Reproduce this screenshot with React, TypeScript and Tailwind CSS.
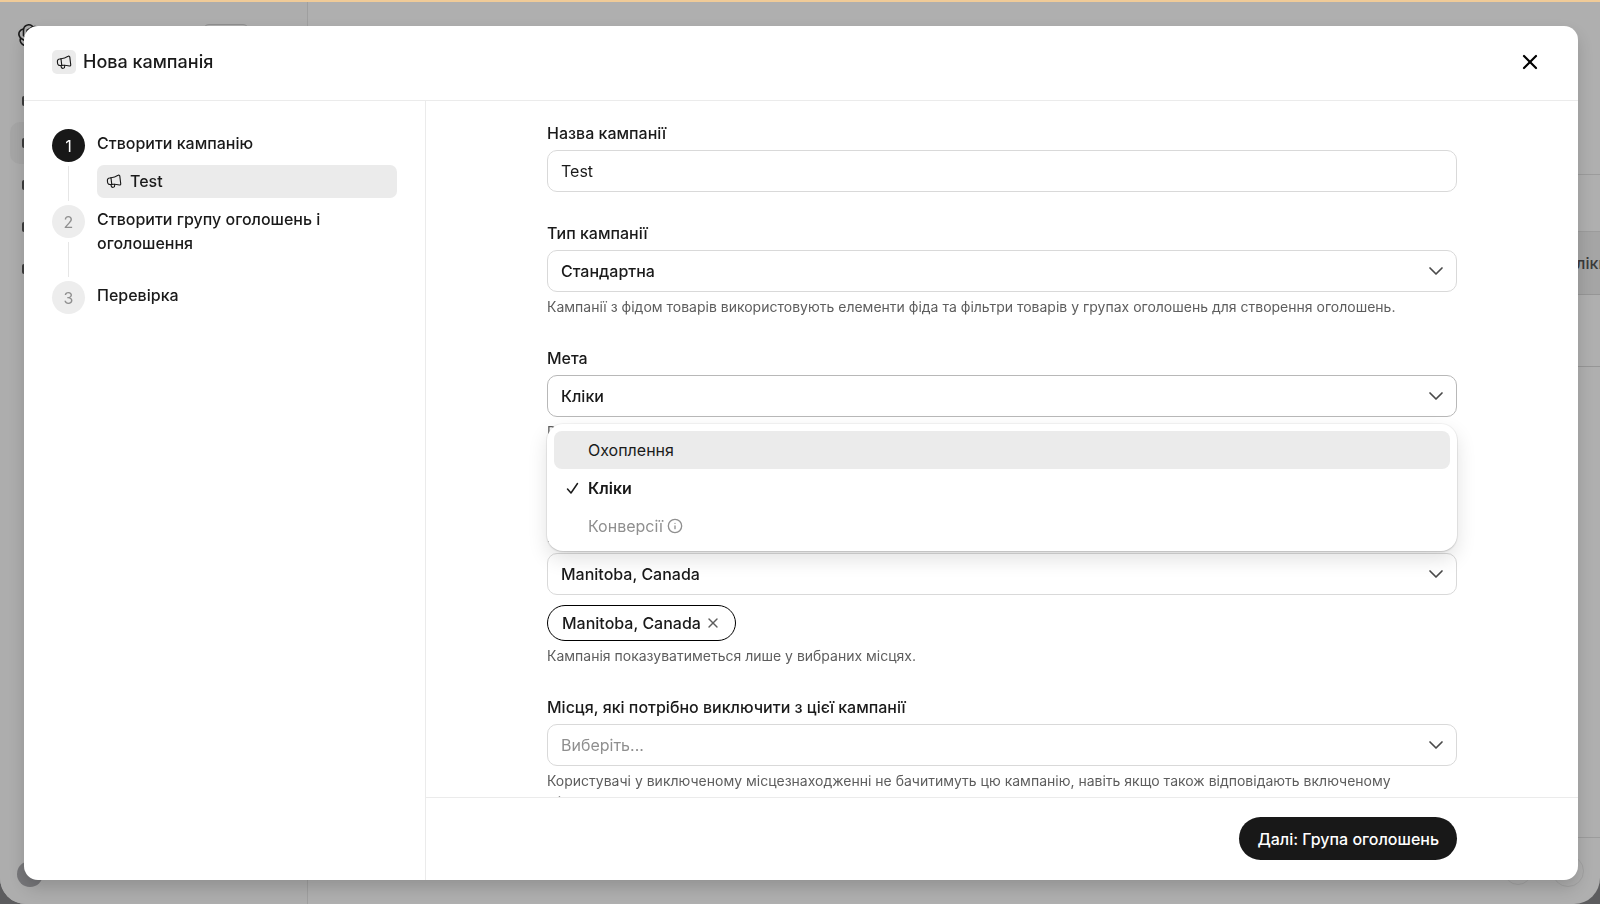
import { useState } from 'react'
import type { ReactNode } from 'react'
import { ChevronDown, Info, X } from 'lucide-react'
import { SiOpenai } from 'react-icons/si'

interface Option {
  value: string
  label: string
  disabled?: boolean
}

const GOALS: Option[] = [
  { value: 'reach', label: 'Охоплення' },
  { value: 'clicks', label: 'Кліки' },
  { value: 'conversions', label: 'Конверсії', disabled: true },
]

const STEPS = ['Створити кампанію', 'Створити групу оголошень і оголошення', 'Перевірка']

function Megaphone({ className }: { className: string }) {
  return (
    <svg className={className} viewBox="0 0 24 24" fill="none" stroke="currentColor" strokeWidth="1.7" strokeLinecap="round" strokeLinejoin="round">
      <path d="M7.5 7.2C11.5 7 15 5.6 18.2 3.5c1-.7 2.3-.1 2.5 1.1l1.4 11.6c.2 1.2-.9 2.100-2 1.8-3.7-1-7.6-1.4-11.5-.9" />
      <path d="M7.5 7.2 5.2 7.5a3.5 3.5 0 0 0-3.1 3.900l.3 2.8a3.5 3.5 0 0 0 3.9 3.1l2.3-.2Z" />
      <path d="M7.3 17.2l.6 2.3a2.6 2.6 0 0 0 5.1-1l-.3-1.5" />
    </svg>
  )
}

function Tick() {
  return (
    <svg className="size-4" viewBox="0 0 16 16" fill="none" stroke="currentColor" strokeWidth="1.5" strokeLinecap="round" strokeLinejoin="round">
      <path d="M3.5 9l3.5 4L13.5 3.5" />
    </svg>
  )
}

function Field({ id, label, help, children }: { id: string; label: string; help?: string; children: ReactNode }) {
  return (
    <div>
      <label htmlFor={id} className="block text-[16px] leading-6 font-medium mb-[5px]">{label}</label>
      {children}
      {help && <p className="mt-1 text-[14px] leading-[21px] text-[#5d5d5d]">{help}</p>}
    </div>
  )
}

function Select({ id, value, options, onChange, open, muted }: {
  id: string
  value: string
  options: Option[]
  onChange: (v: string) => void
  open?: boolean
  muted?: boolean
}) {
  return (
    <div className="grid items-center">
      <select
        id={id}
        value={value}
        onChange={e => onChange(e.target.value)}
        className={`col-start-1 row-start-1 w-full h-[42px] pl-[13px] pr-10 appearance-none bg-white border rounded-[10px] text-[16px] focus:outline-none ${
          open ? 'border-[#b8b8b8]' : 'border-[#d9d9d9]'
        } ${muted ? 'text-[#8f8f8f]' : 'text-[#1a1a1a] font-medium'}`}
      >
        {options.map(o => (
          <option key={o.value} value={o.value} disabled={o.disabled}>{o.label}</option>
        ))}
      </select>
      <ChevronDown className="col-start-1 row-start-1 justify-self-end mr-[9px] size-6 text-[#4a4a4a] pointer-events-none" strokeWidth={1.7} />
    </div>
  )
}

function Backdrop() {
  return (
    <div aria-hidden="true" className="h-screen bg-[#5c5c5e] overflow-hidden">
      <div className="flex h-full bg-[#afafaf] border-t-2 border-[#f0cb98] rounded-b-[26px] overflow-hidden">
        <div className="w-[308px] shrink-0 flex flex-col bg-[#adadad] border-r border-[#9f9f9f] pt-[22px] pb-[17px]">
          <div className="flex items-start justify-between pl-[18px] pr-[58px]">
            <SiOpenai className="size-6 text-[#1a1a1a]" />
            <div className="w-[46px] h-6 border border-[#8f8f8f] rounded-md" />
          </div>
          <div className="flex flex-col mt-8 px-[10px]">
            {['overview', 'campaigns', 'reports', 'billing', 'settings'].map((item, i) => (
              <div key={item} className={`flex items-center h-[42px] pl-3 rounded-[10px] ${i === 1 ? 'bg-[#a6a6a6]' : ''}`}>
                <div className="w-4 h-[10px] rounded-xs bg-[#3c3c3c]" />
              </div>
            ))}
          </div>
          <div className="mt-auto ml-[17px] size-[26px] rounded-full bg-[#77777a]" />
        </div>
        <div className="flex-1 flex flex-col">
          <div className="h-[173px] border-b border-[#9c9c9c]" />
          <div className="h-[57px] border-b border-[#9c9c9c]" />
          <div className="h-[63px] flex items-center justify-end bg-[#a5a5a5] border-b border-[#969696] overflow-hidden text-[16px] font-medium text-[#3a3a3a]">
            <span className="-mr-2">Кліки</span>
          </div>
          <div className="h-[72px] border-b border-[#969696]" />
          <div className="mt-auto h-[67px] flex items-center justify-end gap-5 pr-4 border-t border-[#9c9c9c]">
            <div className="size-7 rounded-full border border-[#a2a2a2]" />
            <div className="size-8 rounded-full border border-[#a2a2a2]" />
          </div>
        </div>
      </div>
    </div>
  )
}

function Steps({ name }: { name: string }) {
  return (
    <ol className="w-[402px] shrink-0 border-r border-[#ebebeb] pt-7 px-7">
      {STEPS.map((step, i) => (
        <li key={step} className="flex gap-3 min-h-[76px]">
          <div className="flex flex-col items-center">
            <span className={`flex items-center justify-center size-[33px] rounded-full text-[16px] ${
              i === 0 ? 'bg-[#181818] text-white' : 'bg-[#ededed] text-[#8f8f8f]'
            }`}>
              {i + 1}
            </span>
            {i < STEPS.length - 1 && <span className="flex-1 w-px my-1 bg-[#e6e6e6]" />}
          </div>
          <div className="flex-1 pt-[2px]">
            <p className="text-[16px] leading-6 font-medium">{step}</p>
            {i === 0 && (
              <button type="button" className="mt-[10px] w-full h-[33px] flex items-center gap-2 px-[9px] pb-px rounded-[7px] bg-[#ebebeb] text-[16px] font-medium">
                <Megaphone className="size-4" />
                {name}
              </button>
            )}
          </div>
        </li>
      ))}
    </ol>
  )
}

export default function App() {
  const [name, setName] = useState('Test')
  const [type, setType] = useState('standard')
  const [goal, setGoal] = useState('clicks')
  const [menuOpen, setMenuOpen] = useState(true)
  const [places, setPlaces] = useState(['Manitoba, Canada'])
  const [excluded, setExcluded] = useState('')

  return (
    <div className="font-[Inter,'Noto_Sans',sans-serif] text-[#1a1a1a]">
      <Backdrop />

      <div className="fixed inset-0 flex pt-[26px] pr-[22px] pb-6 pl-6">
        <div role="dialog" aria-labelledby="dialog-title" className="flex-1 min-w-0 flex flex-col bg-white rounded-[14px] overflow-hidden shadow-[0_8px_16px_rgba(0,0,0,0.16)]">
          <header className="h-[75px] shrink-0 flex items-center gap-[7px] pl-7 pr-9 pb-[2px] border-b border-[#ebebeb]">
            <span className="flex items-center justify-center size-6 rounded-[5px] bg-[#ebebeb]">
              <Megaphone className="size-4" />
            </span>
            <h1 id="dialog-title" className="text-[18px] leading-6 font-medium">Нова кампанія</h1>
            <button type="button" aria-label="Закрити" className="ml-auto text-black">
              <X className="size-6" strokeWidth={2.2} />
            </button>
          </header>

          <div className="flex-1 min-h-0 flex">
            <Steps name={name} />

            <form className="flex-1 min-w-0 flex flex-col" onSubmit={e => e.preventDefault()}>
              <div className="flex-1 min-h-0 overflow-y-auto [scrollbar-width:none] px-10">
                <div className="max-w-[910px] mx-auto pt-5 pb-6 flex flex-col gap-[29px]">
                  <Field id="name" label="Назва кампанії">
                    <input
                      id="name"
                      type="text"
                      value={name}
                      onChange={e => setName(e.target.value)}
                      className="block w-full h-[42px] px-[13px] bg-white border border-[#d9d9d9] rounded-[10px] text-[16px] focus:outline-none focus:border-[#8f8f8f]"
                    />
                  </Field>

                  <Field id="type" label="Тип кампанії" help="Кампанії з фідом товарів використовують елементи фіда та фільтри товарів у групах оголошень для створення оголошень.">
                    <Select id="type" value={type} onChange={setType} options={[{ value: 'standard', label: 'Стандартна' }]} />
                  </Field>

                  {/* Мета з відкритим списком */}
                  <div className="relative h-[149px]">
                    <Field id="goal" label="Мета" help="Рекламу буде оптимізовано для кліків.">
                      <Select id="goal" value={goal} onChange={setGoal} options={GOALS} open={menuOpen} />
                    </Field>
                    {menuOpen && (
                      <ul role="listbox" aria-label="Мета" className="absolute left-0 right-0 top-[78px] z-10 h-[127px] p-[7px] bg-white rounded-[16px] shadow-[0_0_0_1px_rgba(0,0,0,0.04),0_8px_20px_rgba(0,0,0,0.12),0_1px_2px_rgba(0,0,0,0.16)]">
                        {GOALS.map(o => (
                          <li
                            key={o.value}
                            role="option"
                            aria-selected={o.value === goal}
                            aria-disabled={o.disabled}
                            onClick={() => { if (!o.disabled) { setGoal(o.value); setMenuOpen(false) } }}
                            className={`flex items-center h-[38px] pl-[10px] rounded-lg text-[16px] ${
                              o.value === 'reach' ? 'bg-[#ebebeb]' : ''
                            } ${o.value === goal ? 'font-semibold' : ''} ${o.disabled ? 'text-[#8f8f8f]' : ''}`}
                          >
                            <span className="w-6">{o.value === goal && <Tick />}</span>
                            {o.label}
                            {o.disabled && <Info className="ml-1 size-4" strokeWidth={2} />}
                          </li>
                        ))}
                      </ul>
                    )}
                  </div>

                  <div>
                    <Field id="places" label="Місця">
                      <Select id="places" value="manitoba" onChange={() => setPlaces(['Manitoba, Canada'])} options={[{ value: 'manitoba', label: 'Manitoba, Canada' }]} />
                    </Field>
                    <div className="flex gap-2 mt-[10px]">
                      {places.map(p => (
                        <button
                          key={p}
                          type="button"
                          onClick={() => setPlaces(places.filter(x => x !== p))}
                          className="flex items-center gap-1 h-9 px-[14px] border border-black rounded-full text-[16px] font-medium"
                        >
                          {p}
                          <X className="size-4 text-[#5d5d5d]" strokeWidth={2} />
                        </button>
                      ))}
                    </div>
                    <p className="mt-1 text-[14px] leading-[21px] text-[#5d5d5d]">Кампанія показуватиметься лише у вибраних місцях.</p>
                  </div>

                  <Field id="excluded" label="Місця, які потрібно виключити з цієї кампанії" help="Користувачі у виключеному місцезнаходженні не бачитимуть цю кампанію, навіть якщо також відповідають включеному місцезнаходженню.">
                    <Select id="excluded" value={excluded} onChange={setExcluded} options={[{ value: '', label: 'Виберіть...' }]} muted />
                  </Field>
                </div>
              </div>

              <footer className="h-[83px] shrink-0 px-10 pb-px border-t border-[#ebebeb]">
                <div className="max-w-[910px] h-full mx-auto flex items-center justify-end">
                  <button type="submit" className="h-[43px] px-[18px] rounded-full bg-[#181818] text-white text-[16px] font-medium">
                    Далі: Група оголошень
                  </button>
                </div>
              </footer>
            </form>
          </div>
        </div>
      </div>
    </div>
  )
}
